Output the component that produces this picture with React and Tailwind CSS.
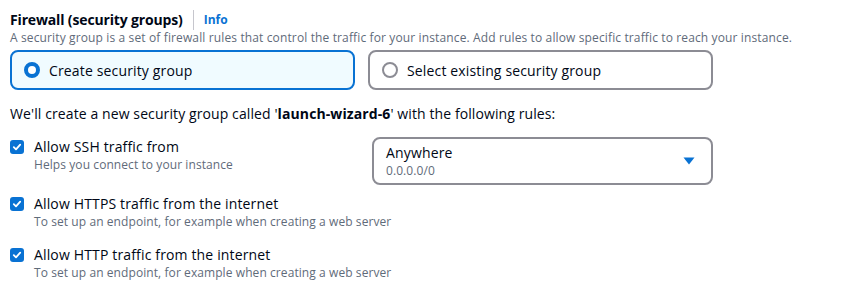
function CheckBox() {
  return (
    <span className="mt-[3px] flex h-[14px] w-[14px] shrink-0 items-center justify-center rounded-[3px] bg-[#0972d3]">
      <svg width="10" height="10" viewBox="0 0 10 10" fill="none">
        <path d="M1.8 5.2 L4 7.4 L8.2 2.6" stroke="white" strokeWidth="1.8" strokeLinecap="round" strokeLinejoin="round" />
      </svg>
    </span>
  );
}

function Rule({ label, hint }) {
  return (
    <div className="flex gap-[10px]">
      <CheckBox />
      <div>
        <div className="text-[14px] leading-[20px] tracking-[0.15px] text-[#000716]">{label}</div>
        <div className="text-[12px] leading-[16px] tracking-[0.08px] text-[#5f6b7a]">{hint}</div>
      </div>
    </div>
  );
}

export default function App() {
  return (
    <main className="min-h-screen bg-white px-[10px] pt-[9px] font-['Open_Sans',sans-serif] text-[#000716]">
      <div className="flex items-center">
        <h2 className="text-[14px] font-bold leading-[22px] tracking-[-0.15px]">Firewall (security groups)</h2>
        <span className="mx-[10px] h-[20px] w-px bg-[#c6c6cd]" />
        <a className="text-[12px] font-bold text-[#0972d3]">Info</a>
      </div>
      <p className="text-[12px] leading-[14px] tracking-[0.13px] text-[#5f6b7a]">
        A security group is a set of firewall rules that control the traffic for your instance. Add rules to allow specific traffic to reach your instance.
      </p>

      <div className="mt-[5px] flex w-[703px] gap-[13px] text-[14px] tracking-[0.15px]">
        <div className="flex h-[40px] flex-1 items-center gap-[9px] rounded-[8px] border-2 border-[#0972d3] bg-[#f0fbff] px-[12px]">
          <span className="h-[16px] w-[16px] rounded-full border-[4px] border-[#0972d3] bg-white" />
          <span>Create security group</span>
        </div>
        <div className="flex h-[40px] flex-1 items-center gap-[9px] rounded-[8px] border-2 border-[#8c8c94] px-[12px]">
          <span className="h-[16px] w-[16px] rounded-full border-2 border-[#8c8c94] bg-white" />
          <span>Select existing security group</span>
        </div>
      </div>

      <p className="mt-[14px] text-[14px] leading-[20px] tracking-[0.1px]">
        We'll create a new security group called '<b>launch-wizard-6</b>' with the following rules:
      </p>

      <div className="mt-[13px] flex">
        <div className="w-[362px]">
          <Rule label="Allow SSH traffic from" hint="Helps you connect to your instance" />
        </div>
        <div className="flex h-[48px] w-[341px] items-center justify-between rounded-[8px] border-2 border-[#8c8c94] pl-[12px] pr-[16px]">
          <div>
            <div className="text-[14px] leading-[19px] tracking-[0.15px]">Anywhere</div>
            <div className="text-[12px] leading-[17px] tracking-[0.08px] text-[#5f6b7a]">0.0.0.0/0</div>
          </div>
          <svg width="12" height="8" viewBox="0 0 12 8">
            <path d="M0.5 0.5 H11.5 L6 7.5 Z" fill="#0972d3" />
          </svg>
        </div>
      </div>
      <div className="mt-[9px]">
        <Rule label="Allow HTTPS traffic from the internet" hint="To set up an endpoint, for example when creating a web server" />
      </div>
      <div className="mt-[15px]">
        <Rule label="Allow HTTP traffic from the internet" hint="To set up an endpoint, for example when creating a web server" />
      </div>
    </main>
  );
}
